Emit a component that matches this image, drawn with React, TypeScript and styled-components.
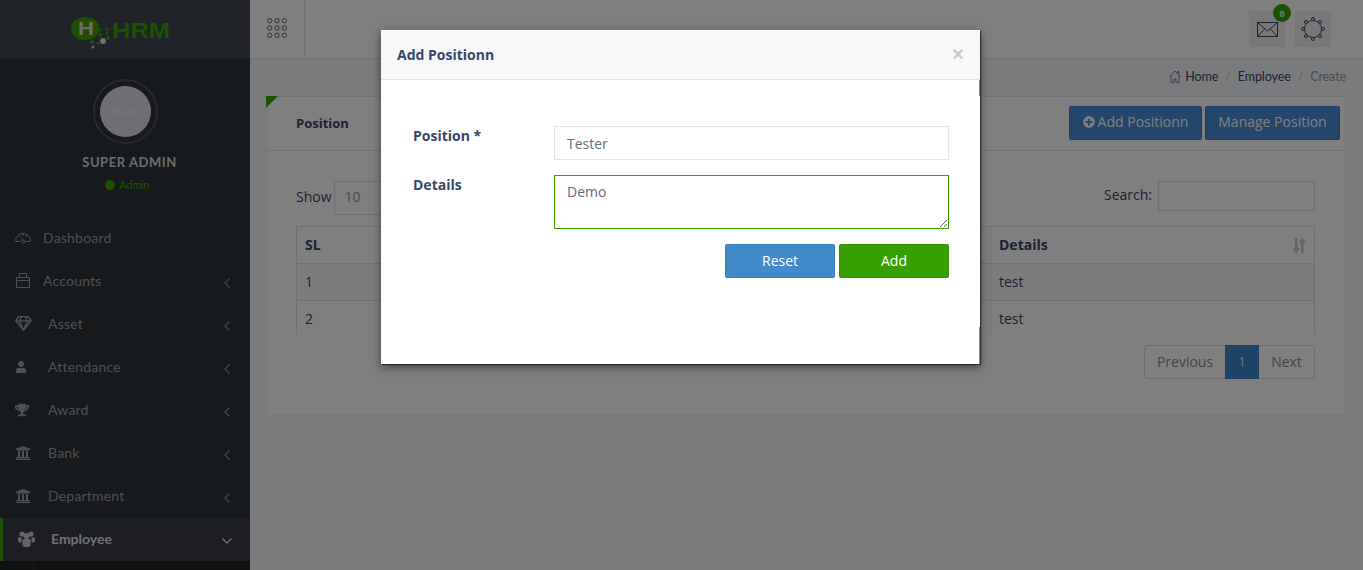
import React from "react";
import styled, { createGlobalStyle } from "styled-components";
import { FaUser, FaTrophy, FaUniversity, FaRegGem, FaPlusCircle } from "react-icons/fa";

const GlobalStyle = createGlobalStyle`
  html, body {
    margin: 0;
    padding: 0;
    height: 100%;
    overflow: hidden;
  }
  * {
    box-sizing: border-box;
  }
  body {
    font-family: "Open Sans", "Liberation Sans", sans-serif;
    font-size: 14px;
    color: #374767;
    background: #f4f6f9;
  }
`;

const Page = styled.div`
  position: relative;
  display: flex;
  width: 1363px;
  height: 570px;
  overflow: hidden;
`;

const Sidebar = styled.aside`
  flex: 0 0 250px;
  display: flex;
  flex-direction: column;
  background: #2f343a;
  font-family: Lato, "Open Sans", sans-serif;
`;

const LogoBar = styled.div`
  height: 59px;
  display: flex;
  align-items: center;
  justify-content: center;
  padding: 7px 8px 0 0;
  background: #40474e;
`;

const Profile = styled.div`
  height: 158px;
  display: flex;
  flex-direction: column;
  align-items: center;
  padding-top: 20px;
`;

const AvatarRing = styled.div`
  width: 65px;
  height: 65px;
  border-radius: 50%;
  border: 2px solid #4b5058;
  display: flex;
  align-items: center;
  justify-content: center;
`;

const Avatar = styled.div`
  width: 51px;
  height: 51px;
  border-radius: 50%;
  background: #dedfe6;
  color: #f0f0f0;
  font-size: 8px;
  font-weight: 700;
  display: flex;
  align-items: center;
  justify-content: center;
`;

const UserName = styled.div`
  margin-top: 8px;
  padding-left: 9px;
  font-size: 13px;
  font-weight: 700;
  letter-spacing: 0.55px;
  line-height: 20px;
  color: #d6d8dc;
`;

const UserRole = styled.div`
  margin-top: 6px;
  padding-left: 4px;
  display: flex;
  align-items: center;
  gap: 5px;
  font-size: 10.5px;
  line-height: 14px;
  color: #3aa000;
`;

const RoleDot = styled.span`
  width: 10px;
  height: 10px;
  border-radius: 50%;
  background: #3aa000;
`;

const Menu = styled.nav`
  display: flex;
  flex-direction: column;
  flex: 1;
`;

const MenuRow = styled.div<{ $active?: boolean }>`
  flex: 0 0 43px;
  display: flex;
  align-items: center;
  padding: 0 18px 2px 15px;
  border-left: ${(p) => (p.$active ? "3px solid #3aa000" : "0")};
  background: ${(p) => (p.$active ? "#393d45" : "transparent")};
  color: ${(p) => (p.$active ? "#dfe1e4" : "#9da0a4")};
  font-size: 14px;
  font-weight: ${(p) => (p.$active ? 700 : 400)};
  letter-spacing: ${(p) => (p.$active ? 0 : 0.2)}px;
`;

const MenuIcon = styled.span<{ $width: number }>`
  flex: 0 0 ${(p) => p.$width}px;
  display: flex;
  align-items: center;
`;

const MenuLabel = styled.span`
  flex: 1;
`;

const Caret = styled.svg<{ $flush?: boolean }>`
  margin: 5px ${(p) => (p.$flush ? 0 : 2)}px 0 0;
`;

const SubMenu = styled.div`
  position: relative;
  flex: 1;
  background: #1f2227;

  &::before {
    content: "";
    position: absolute;
    top: 0;
    bottom: 0;
    left: 33px;
    width: 2px;
    background: #2a2d34;
  }
`;

const Main = styled.main`
  flex: 1;
  display: flex;
  flex-direction: column;
  min-width: 0;
`;

const TopBar = styled.header`
  height: 59px;
  display: flex;
  align-items: center;
  justify-content: space-between;
  background: #ffffff;
  border-bottom: 1px solid #e1e3ea;
  padding-right: 32px;
`;

const GridToggle = styled.div`
  width: 55px;
  height: 58px;
  display: flex;
  align-items: center;
  justify-content: center;
  padding: 0 1px 2px 0;
  border-right: 1px solid #e1e3ea;
`;

const TopActions = styled.div`
  display: flex;
  gap: 10px;
`;

const TopIcon = styled.div`
  position: relative;
  width: 36px;
  height: 36px;
  display: flex;
  align-items: center;
  justify-content: center;
  background: #f1f1f3;
  border: 1px solid #eeeeef;
`;

const Badge = styled.span`
  position: absolute;
  top: -8px;
  right: -7px;
  width: 18px;
  height: 18px;
  border-radius: 50%;
  background: #3aa000;
  color: #fff;
  font-size: 8px;
  font-weight: 700;
  display: flex;
  align-items: center;
  justify-content: center;
`;

const Breadcrumbs = styled.div`
  height: 37px;
  padding: 0 17px 3px 0;
  display: flex;
  justify-content: flex-end;
  align-items: center;
  font-family: Lato, "Open Sans", sans-serif;
  font-size: 12.5px;
  letter-spacing: -0.1px;
  color: #374767;
`;

const Crumb = styled.span<{ $muted?: boolean }>`
  display: flex;
  align-items: center;
  gap: 4px;
  color: ${(p) => (p.$muted ? "#999999" : "#374767")};
`;

const CrumbSep = styled.span`
  margin: 0 7px;
  color: #cccccc;
`;

const Card = styled.section`
  position: relative;
  margin: 0 18px 0 16px;
  height: 320px;
  background: #ffffff;
  border: 1px solid #f0f1f4;
  border-top: 1px solid #e4e5f0;
`;

const Corner = styled.span`
  position: absolute;
  top: -1px;
  left: -1px;
  width: 0;
  height: 0;
  border-style: solid;
  border-width: 12px 12px 0 0;
  border-color: #3aa000 transparent transparent transparent;
`;

const CardHeader = styled.div`
  height: 54px;
  display: flex;
  align-items: center;
  justify-content: space-between;
  padding: 0 4px 2px 29px;
  border-bottom: 1px solid #e4e5e7;
`;

const CardTitle = styled.h2`
  margin: 0;
  font-size: 13px;
  font-weight: 700;
  color: #374767;
`;

const HeaderButtons = styled.div`
  display: flex;
  gap: 3px;
`;

const Button = styled.button<{ $bg: string; $width: number }>`
  width: ${(p) => p.$width}px;
  height: 34px;
  padding: 0 0 2px;
  display: inline-flex;
  align-items: center;
  justify-content: center;
  gap: 3px;
  font-family: "Open Sans", sans-serif;
  font-size: 14px;
  color: #ffffff;
  background: ${(p) => p.$bg};
  border: 1px solid rgba(0, 0, 0, 0.1);
  border-radius: 2px;
`;

const CardBody = styled.div`
  padding: 30px 29px 0;
`;

const TableTools = styled.div`
  height: 45px;
  display: flex;
  justify-content: space-between;
  align-items: flex-start;
`;

const ToolGroup = styled.label`
  display: flex;
  align-items: center;
  gap: 6px;
  line-height: 16px;
  color: #374767;
`;

const ToolText = styled.span`
  padding-bottom: 3px;
`;

const LengthBox = styled.div`
  width: 60px;
  height: 34px;
  padding: 0 10px 2px;
  margin-left: -4px;
  display: flex;
  align-items: center;
  color: #999;
  border: 1px solid #dddddd;
  border-radius: 3px;
`;

const SearchInput = styled.input`
  width: 157px;
  height: 30px;
  border: 1px solid #dddddd;
  background: #fff;
`;

const TableClip = styled.div`
  height: 109px;
  overflow: hidden;
`;

const Table = styled.table`
  width: 100%;
  border-collapse: collapse;
  table-layout: fixed;
  color: #374767;

  th, td {
    height: 37px;
    padding: 0 8px 2px;
    border: 1px solid #dfe0e2;
    text-align: left;
    vertical-align: middle;
  }
  th {
    font-weight: 700;
    position: relative;
  }
  tbody tr:nth-child(odd) {
    background: #f9f9f9;
  }
`;

const SortIcon = styled.svg`
  position: absolute;
  right: 8px;
  top: 11px;
`;

const Pager = styled.div`
  margin-top: 10px;
  display: flex;
  justify-content: flex-end;
`;

const PageLink = styled.span<{ $active?: boolean; $width: number }>`
  width: ${(p) => p.$width}px;
  height: 34px;
  padding-bottom: 2px;
  display: flex;
  align-items: center;
  justify-content: center;
  color: ${(p) => (p.$active ? "#d8e2ec" : "#8a8a8a")};
  background: ${(p) => (p.$active ? "#3a88cf" : "#ffffff")};
  border-top: 1px solid ${(p) => (p.$active ? "#3a88cf" : "#dddddd")};
  border-bottom: 1px solid ${(p) => (p.$active ? "#3a88cf" : "#dddddd")};

  &:first-child {
    border-left: 1px solid #dddddd;
    border-radius: 4px 0 0 4px;
  }
  &:last-child {
    border-right: 1px solid #dddddd;
    border-radius: 0 4px 4px 0;
  }
`;

const Overlay = styled.div`
  position: absolute;
  inset: 0;
  background: rgba(0, 0, 0, 0.5);
`;

const Modal = styled.div`
  position: absolute;
  left: 381px;
  top: 30px;
  width: 599px;
  height: 334px;
  background: #ffffff;
  box-shadow: 0 3px 9px rgba(0, 0, 0, 0.5), 1px 1px 1px rgba(0, 0, 0, 0.5);

  &::before,
  &::after {
    content: "";
    position: absolute;
    right: 0;
    width: 1px;
    background: #8c8c8c;
  }
  &::before {
    top: 50px;
    height: 16px;
  }
  &::after {
    top: 297px;
    height: 37px;
  }
`;

const ModalHeader = styled.div`
  height: 50px;
  display: flex;
  align-items: center;
  justify-content: space-between;
  padding: 0 16px;
  background: #f7f8fa;
  border-bottom: 1px solid #e1e3e9;
`;

const ModalTitle = styled.h4`
  margin: 0;
  font-size: 14px;
  font-weight: 700;
  color: #374767;
`;

const CloseButton = styled.span`
  margin-bottom: 2px;
  font-family: "Liberation Sans", sans-serif;
  font-size: 20px;
  font-weight: 700;
  line-height: 1;
  color: #c8c8c8;
`;

const ModalForm = styled.form`
  display: grid;
  grid-template-columns: 141px 395px;
  row-gap: 15px;
  padding: 46px 0 0 32px;
`;

const FieldLabel = styled.label`
  font-weight: 700;
  line-height: 19px;
  color: #374767;
`;

const TextInput = styled.input`
  height: 34px;
  padding: 0 12px;
  font: inherit;
  color: #6a6c75;
  background: #ffffff;
  border: 1px solid #e4e5e7;
  outline: none;
`;

const TextArea = styled.textarea`
  height: 54px;
  padding: 6px 12px;
  font: inherit;
  color: #6a6c75;
  border: 1px solid #37a000;
  outline: none;
  resize: vertical;
`;

const FormActions = styled.div`
  grid-column: 2;
  display: flex;
  justify-content: flex-end;
  gap: 4px;
`;

const DashboardIcon = () => (
  <svg width="16" height="14" viewBox="0 0 16 14" fill="none" stroke="#9da0a4" strokeWidth="1">
    <path d="M1 10.500C0 6 3.500 2.500 8 2.500s8 3.500 7 8H10.500M5.500 10.500H1M4 4l1.500 2M8 2.500V5M12 4l-1.500 2" />
    <path d="M6 7l2.500 3" />
    <circle cx="8.500" cy="10.500" r="1.500" />
  </svg>
);

const BriefcaseIcon = () => (
  <svg width="16" height="17" viewBox="0 0 16 17" fill="none" stroke="#9da0a4" strokeWidth="1">
    <rect x="1.500" y="5.500" width="13" height="10" />
    <path d="M4.500 5.500v-4h7v4M1.500 8.500h13" />
  </svg>
);

const GroupIcon = () => (
  <svg width="17" height="16" viewBox="0 0 17 16" fill="#c9cbcf">
    <circle cx="4" cy="3" r="2.600" />
    <circle cx="13" cy="3" r="2.600" />
    <path d="M0 6.500h3.500v5H1.500L0 10zM17 6.500h-3.500v5h2L17 10z" />
    <circle cx="8.500" cy="5" r="3" />
    <path d="M4.500 9c0-.6.5-1 1-1h6c.5 0 1 .4 1 1v5.500c0 .8-1 1.500-4 1.500s-4-.7-4-1.500z" />
  </svg>
);

const GridIcon = () => (
  <svg width="20" height="20" viewBox="0 0 20 20" fill="none" stroke="#5d6378" strokeWidth="1">
    {[2.700, 10, 17.300].flatMap((y) =>
      [2.700, 10, 17.300].map((x) => <circle key={`${x}-${y}`} cx={x} cy={y} r="2.200" />)
    )}
  </svg>
);

const MailIcon = () => (
  <svg width="21" height="15" viewBox="0 0 21 15" fill="none" stroke="#374767" strokeWidth="1">
    <rect x="0.500" y="0.500" width="20" height="14" />
    <path d="M0.500 0.500L10.500 9l10-8.500M0.500 14.500l7-7.500M20.500 14.500l-7-7.500" />
  </svg>
);

const GearIcon = () => (
  <svg width="24" height="24" viewBox="0 0 24 24" fill="none" stroke="#374767" strokeWidth="1">
    <circle cx="12" cy="12" r="8.500" />
    {[0, 45, 90, 135, 180, 225, 270, 315].map((a) => (
      <circle
        key={a}
        cx={12 + 10 * Math.cos((a * Math.PI) / 180)}
        cy={12 + 10 * Math.sin((a * Math.PI) / 180)}
        r="1.500"
        fill="#f1f1f3"
      />
    ))}
  </svg>
);

const HomeIcon = () => (
  <svg width="12" height="13" viewBox="0 0 12 13" fill="none" stroke="#5d6378" strokeWidth="0.8">
    <path d="M0.500 6.500L6 1l5.500 5.500M2 5.500v7h3V9h2v3.500h3v-7M8.500 3V1.500H10v3" />
  </svg>
);

const Logo = () => (
  <svg width="100" height="34" viewBox="0 0 100 34">
    <path d="M14 1c8 0 14 4.500 14 11.500S22 24 15 24c-2 0-3 0-4 .5L7 22.500C3 20.500 0 17 0 12.500 0 6 6 1 14 1z" fill="#3aa000" />
    <text x="7" y="19" fontFamily="Liberation Sans" fontWeight="700" fontSize="19" fill="#d8d8d8" textLength="16" lengthAdjust="spacingAndGlyphs">H</text>
    <text x="41" y="22" fontFamily="Liberation Sans" fontWeight="700" fontSize="22" fill="#3aa000" textLength="58" lengthAdjust="spacingAndGlyphs">HRM</text>
    {[[36, 13, 1.500], [36, 17, 1.500], [29, 14, 1.500], [29, 19, 2], [37, 22, 2], [27, 27, 1.500], [21, 26, 2]].map(([x, y, r], i) => (
      <circle key={i} cx={x} cy={y} r={r} fill="#3aa000" />
    ))}
    <circle cx="32" cy="25" r="3" fill="#e0e0e0" />
    <circle cx="22" cy="31" r="1.500" fill="#cfcfcf" />
  </svg>
);

const ChevronLeft = () => (
  <Caret width="6" height="10" viewBox="0 0 6 10" fill="none" stroke="#85888c" strokeWidth="1.300">
    <path d="M5.500 .5L1 5l4.500 4.500" />
  </Caret>
);

const ChevronDown = () => (
  <Caret $flush width="10" height="6" viewBox="0 0 10 6" fill="none" stroke="#dfe1e4" strokeWidth="1.300">
    <path d="M.5 .5L5 5l4.500-4.500" />
  </Caret>
);

const App = () => {
  return (
    <>
      <GlobalStyle />
      <Page>
        <Sidebar>
          <LogoBar>
            <Logo />
          </LogoBar>
          <Profile>
            <AvatarRing>
              <Avatar>50 x 50</Avatar>
            </AvatarRing>
            <UserName>SUPER ADMIN</UserName>
            <UserRole>
              <RoleDot />
              Admin
            </UserRole>
          </Profile>
          <Menu>
            <MenuRow>
              <MenuIcon $width={28}><DashboardIcon /></MenuIcon>
              <MenuLabel>Dashboard</MenuLabel>
            </MenuRow>
            <MenuRow>
              <MenuIcon $width={28}><BriefcaseIcon /></MenuIcon>
              <MenuLabel>Accounts</MenuLabel>
              <ChevronLeft />
            </MenuRow>
            <MenuRow>
              <MenuIcon $width={33}><FaRegGem size={17} /></MenuIcon>
              <MenuLabel>Asset</MenuLabel>
              <ChevronLeft />
            </MenuRow>
            <MenuRow>
              <MenuIcon $width={33}><FaUser size={12} /></MenuIcon>
              <MenuLabel>Attendance</MenuLabel>
              <ChevronLeft />
            </MenuRow>
            <MenuRow>
              <MenuIcon $width={33}><FaTrophy size={14} /></MenuIcon>
              <MenuLabel>Award</MenuLabel>
              <ChevronLeft />
            </MenuRow>
            <MenuRow>
              <MenuIcon $width={33}><FaUniversity size={16} /></MenuIcon>
              <MenuLabel>Bank</MenuLabel>
              <ChevronLeft />
            </MenuRow>
            <MenuRow>
              <MenuIcon $width={33}><FaUniversity size={16} /></MenuIcon>
              <MenuLabel>Department</MenuLabel>
              <ChevronLeft />
            </MenuRow>
            <MenuRow $active>
              <MenuIcon $width={33}><GroupIcon /></MenuIcon>
              <MenuLabel>Employee</MenuLabel>
              <ChevronDown />
            </MenuRow>
            <SubMenu />
          </Menu>
        </Sidebar>
        <Main>
          <TopBar>
            <GridToggle>
              <GridIcon />
            </GridToggle>
            <TopActions>
              <TopIcon>
                <MailIcon />
                <Badge>0</Badge>
              </TopIcon>
              <TopIcon>
                <GearIcon />
              </TopIcon>
            </TopActions>
          </TopBar>
          <Breadcrumbs>
            <Crumb>
              <HomeIcon />
              Home
            </Crumb>
            <CrumbSep>/</CrumbSep>
            <Crumb>Employee</Crumb>
            <CrumbSep>/</CrumbSep>
            <Crumb $muted>Create</Crumb>
          </Breadcrumbs>
          <Card>
            <Corner />
            <CardHeader>
              <CardTitle>Position</CardTitle>
              <HeaderButtons>
                <Button $bg="#468ed8" $width={133}>
                  <FaPlusCircle size={12} />
                  Add Positionn
                </Button>
                <Button $bg="#468ed8" $width={135}>
                  Manage Position
                </Button>
              </HeaderButtons>
            </CardHeader>
            <CardBody>
              <TableTools>
                <ToolGroup>
                  <ToolText>Show</ToolText>
                  <LengthBox>10</LengthBox>
                </ToolGroup>
                <ToolGroup>
                  <ToolText>Search:</ToolText>
                  <SearchInput />
                </ToolGroup>
              </TableTools>
              <TableClip>
                <Table>
                  <colgroup>
                    <col width="300" />
                    <col width="394" />
                    <col />
                  </colgroup>
                  <thead>
                    <tr>
                      <th>SL</th>
                      <th>Position</th>
                      <th>
                        Details
                        <SortIcon width="14" height="15" viewBox="0 0 14 14" preserveAspectRatio="none" fill="#c8c8c8">
                          <path d="M3 0h2.500v9.500H8L4.200 14 .5 9.500H3zM9 14h2.500V4.500H14L10.200 0 6.500 4.500H9z" />
                        </SortIcon>
                      </th>
                    </tr>
                  </thead>
                  <tbody>
                    <tr>
                      <td>1</td>
                      <td>Tester</td>
                      <td>test</td>
                    </tr>
                    <tr>
                      <td>2</td>
                      <td>Developer</td>
                      <td>test</td>
                    </tr>
                  </tbody>
                </Table>
              </TableClip>
              <Pager>
                <PageLink $width={81}>Previous</PageLink>
                <PageLink $active $width={34}>1</PageLink>
                <PageLink $width={56}>Next</PageLink>
              </Pager>
            </CardBody>
          </Card>
        </Main>
        <Overlay />
        <Modal>
          <ModalHeader>
            <ModalTitle>Add Positionn</ModalTitle>
            <CloseButton>×</CloseButton>
          </ModalHeader>
          <ModalForm>
            <FieldLabel>Position *</FieldLabel>
            <TextInput defaultValue="Tester" />
            <FieldLabel>Details</FieldLabel>
            <TextArea defaultValue="Demo" />
            <FormActions>
              <Button as="span" $bg="#428bca" $width={110}>Reset</Button>
              <Button as="span" $bg="#37a000" $width={110}>Add</Button>
            </FormActions>
          </ModalForm>
        </Modal>
      </Page>
    </>
  );
};

export default App;
